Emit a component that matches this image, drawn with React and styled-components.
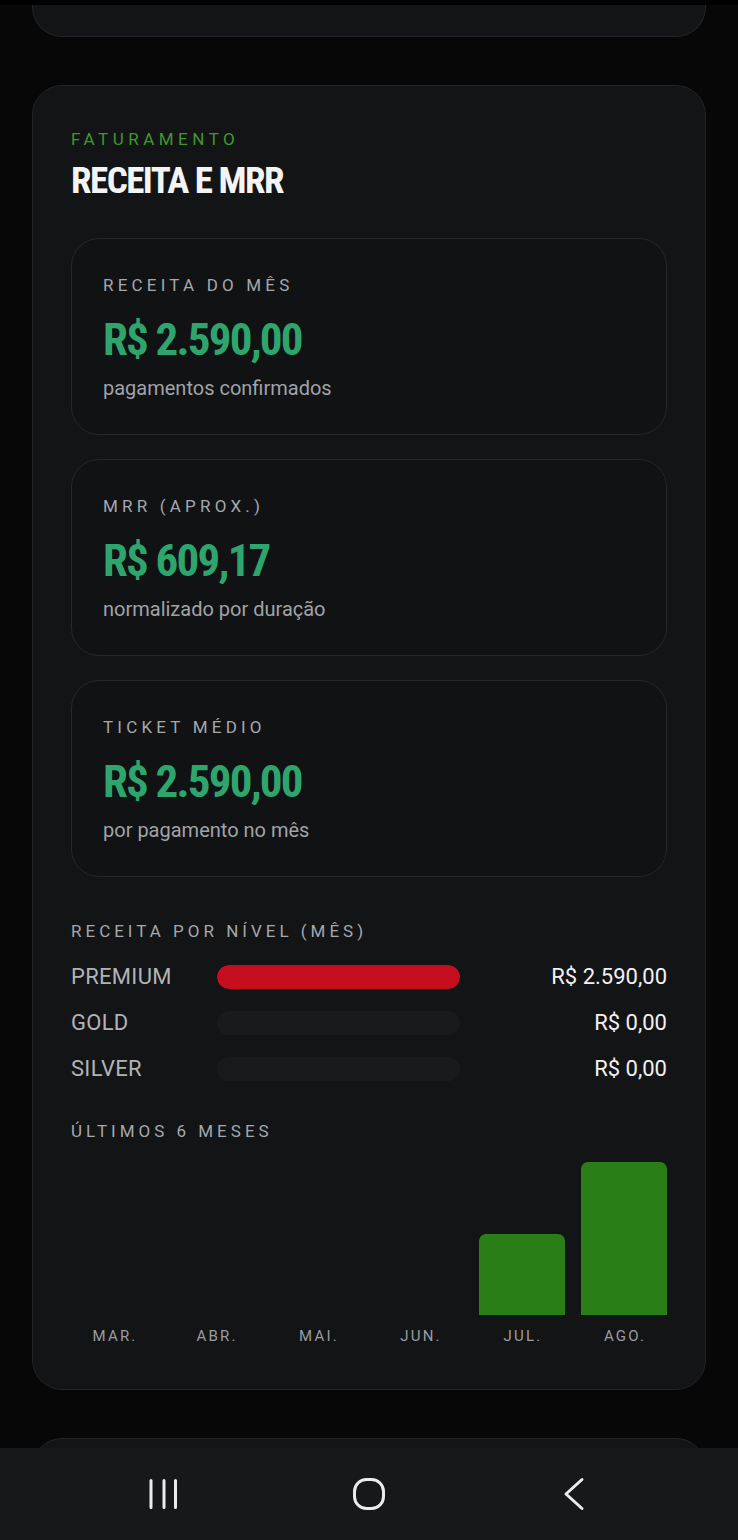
import React from "react";
import styled, { createGlobalStyle } from "styled-components";

const GlobalStyle = createGlobalStyle`
  html, body {
    margin: 0;
    padding: 0;
    background: #070707;
    height: 1540px;
    overflow: hidden;
  }
  body {
    font-family: "Roboto", "Inter", "Liberation Sans", sans-serif;
    color: #f2f2f2;
  }
  * { box-sizing: border-box; }
`;

const condensed = `"Roboto Condensed", "Liberation Sans Narrow", "DejaVu Sans Condensed", "Roboto", sans-serif`;

const Screen = styled.div`
  position: relative;
  width: 738px;
  height: 1540px;
  overflow: hidden;
  background: #070707;
  display: flex;
  flex-direction: column;
`;

const StatusStrip = styled.div`
  height: 5px;
  flex-shrink: 0;
  background: #000;
`;

const Stack = styled.main`
  display: flex;
  flex-direction: column;
  gap: 48px;
  padding: 0 32px;
`;

const CardTail = styled.section`
  height: 32px;
  flex-shrink: 0;
  background: #131416;
  border: 1px solid #222427;
  border-top: none;
  border-radius: 0 0 30px 30px;
`;

const Card = styled.section`
  flex-shrink: 0;
  background: #131416;
  border: 1px solid #222427;
  border-radius: 30px;
  padding: ${(p) => p.$padding || "43px 38px 43px"};
  min-height: ${(p) => p.$minHeight || "0"};
  display: flex;
  flex-direction: column;
`;

const Eyebrow = styled.div`
  font-size: 17px;
  line-height: 20px;
  letter-spacing: 4.5px;
  color: #40982d;
  text-transform: uppercase;
`;

const Title = styled.h2`
  margin: 10px 0 0;
  font-family: ${condensed};
  font-stretch: condensed;
  font-weight: 700;
  font-size: 37px;
  line-height: 44px;
  letter-spacing: -1.5px;
  color: #f4f4f4;
  text-transform: uppercase;
`;

const MetricList = styled.div`
  margin-top: 35px;
  display: flex;
  flex-direction: column;
  gap: 24px;
`;

const MetricCard = styled.div`
  background: #111214;
  border: 1px solid #26282b;
  border-radius: 28px;
  padding: 36px 31px 34px;
  display: flex;
  flex-direction: column;
`;

const MetricLabel = styled.div`
  font-size: 17px;
  line-height: 20px;
  letter-spacing: 4.2px;
  color: #a5a8ac;
  text-transform: uppercase;
`;

const MetricValue = styled.div`
  margin-top: 22px;
  font-family: ${condensed};
  font-stretch: condensed;
  font-weight: 700;
  font-size: 45px;
  line-height: 45px;
  letter-spacing: -1.8px;
  color: #2fa56e;
`;

const MetricNote = styled.div`
  margin-top: 14px;
  font-size: 20px;
  line-height: 24px;
  color: #a0a3a7;
`;

const SectionLabel = styled.div`
  margin-top: ${(p) => p.$top || "44px"};
  font-size: 17px;
  line-height: 20px;
  letter-spacing: 4px;
  color: #a5a8ac;
  text-transform: uppercase;
`;

const TierList = styled.div`
  margin-top: 24px;
  display: flex;
  flex-direction: column;
  gap: 22px;
`;

const TierRow = styled.div`
  display: grid;
  grid-template-columns: 146px 243px 1fr;
  align-items: center;
  height: 24px;
`;

const TierName = styled.span`
  font-size: 22px;
  line-height: 24px;
  letter-spacing: 0.3px;
  color: #b1b3b7;
  text-transform: uppercase;
`;

const Track = styled.div`
  height: 24px;
  border-radius: 12px;
  background: #191a1c;
  overflow: hidden;
`;

const Fill = styled.div`
  height: 100%;
  border-radius: 12px;
  background: #c50f1f;
`;

const TierValue = styled.span`
  text-align: right;
  font-size: 22px;
  line-height: 24px;
  color: #f1f1f1;
`;

const Chart = styled.div`
  margin-top: 21px;
  display: grid;
  grid-template-columns: repeat(6, 1fr);
  column-gap: 16px;
`;

const BarSlot = styled.div`
  height: 153px;
  display: flex;
  align-items: flex-end;
`;

const Bar = styled.div`
  width: 100%;
  background: #2a7e17;
  border-radius: 7px 7px 0 0;
`;

const MonthLabel = styled.div`
  margin-top: 11px;
  text-align: center;
  font-size: 15px;
  line-height: 20px;
  letter-spacing: 2.2px;
  padding-left: 2px;
  color: #9a9da1;
  text-transform: uppercase;
`;

const NavBar = styled.nav`
  position: absolute;
  left: 0;
  right: 0;
  bottom: 0;
  height: 92px;
  background: #17181a;
  display: grid;
  grid-template-columns: repeat(3, 1fr);
  align-items: center;
  justify-items: center;
  padding: 0 61px;
`;

const NavButton = styled.button`
  background: none;
  border: none;
  padding: 0;
  width: 40px;
  height: 40px;
  display: flex;
  align-items: center;
  justify-content: center;
  color: #ececec;
`;

const metrics = [
  { label: "Receita do mês", value: "R$ 2.590,00", note: "pagamentos confirmados" },
  { label: "MRR (aprox.)", value: "R$ 609,17", note: "normalizado por duração" },
  { label: "Ticket médio", value: "R$ 2.590,00", note: "por pagamento no mês" },
];

const tiers = [
  { name: "Premium", amount: 2590 },
  { name: "Gold", amount: 0 },
  { name: "Silver", amount: 0 },
];

const months = [
  { m: "mar.", v: 0 },
  { m: "abr.", v: 0 },
  { m: "mai.", v: 0 },
  { m: "jun.", v: 0 },
  { m: "jul.", v: 1372 },
  { m: "ago.", v: 2590 },
];

const brl = (n) =>
  "R$ " +
  n
    .toFixed(2)
    .replace(".", ",")
    .replace(/\B(?=(\d{3})+(?!\d))/g, ".");

export default function App() {
  const tierMax = Math.max(...tiers.map((t) => t.amount), 1);
  const monthMax = Math.max(...months.map((m) => m.v), 1);
  return (
    <>
      <GlobalStyle />
      <Screen>
        <StatusStrip />
        <Stack>
          <CardTail />
          <Card>
            <Eyebrow>Faturamento</Eyebrow>
            <Title>Receita e MRR</Title>
            <MetricList>
              {metrics.map((m) => (
                <MetricCard key={m.label}>
                  <MetricLabel>{m.label}</MetricLabel>
                  <MetricValue>{m.value}</MetricValue>
                  <MetricNote>{m.note}</MetricNote>
                </MetricCard>
              ))}
            </MetricList>

            <SectionLabel>Receita por nível (mês)</SectionLabel>
            <TierList>
              {tiers.map((t) => (
                <TierRow key={t.name}>
                  <TierName>{t.name}</TierName>
                  <Track>
                    {t.amount > 0 && (
                      <Fill style={{ width: `${(t.amount / tierMax) * 100}%` }} />
                    )}
                  </Track>
                  <TierValue>{brl(t.amount)}</TierValue>
                </TierRow>
              ))}
            </TierList>

            <SectionLabel $top="40px">Últimos 6 meses</SectionLabel>
            <Chart>
              {months.map((m) => (
                <div key={m.m}>
                  <BarSlot>
                    {m.v > 0 && <Bar style={{ height: `${(m.v / monthMax) * 100}%` }} />}
                  </BarSlot>
                  <MonthLabel>{m.m}</MonthLabel>
                </div>
              ))}
            </Chart>
          </Card>
          <Card $minHeight="200px" />
        </Stack>

        <NavBar>
          <NavButton aria-label="Recentes">
            <svg width="32" height="32" viewBox="0 0 32 32" fill="none" stroke="currentColor" strokeWidth="3" strokeLinecap="round">
              <path d="M3 2.5v27M16 2.5v27M27.5 2.5v27" />
            </svg>
          </NavButton>
          <NavButton aria-label="Início">
            <svg width="34" height="34" viewBox="0 0 34 34" fill="none" stroke="currentColor" strokeWidth="3">
              <rect x="2.5" y="2.5" width="29" height="29" rx="12" />
            </svg>
          </NavButton>
          <NavButton aria-label="Voltar">
            <svg width="24" height="34" viewBox="0 0 24 34" fill="none" stroke="currentColor" strokeWidth="3" strokeLinecap="round" strokeLinejoin="round">
              <path d="M20 2.5L4 17l16 14.5" />
            </svg>
          </NavButton>
        </NavBar>
      </Screen>
    </>
  );
}
